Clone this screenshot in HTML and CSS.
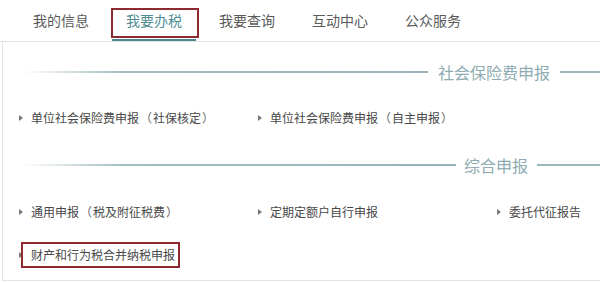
FILE: index.html
```html
<!DOCTYPE html>
<html lang="zh-CN">
<head>
<meta charset="utf-8">
<title>我要办税</title>
<link rel="stylesheet" href="styles.css">
</head>
<body>
<nav class="tabs">
  <a class="tab">我的信息</a>
  <a class="tab active">我要办税</a>
  <a class="tab">我要查询</a>
  <a class="tab">互动中心</a>
  <a class="tab">公众服务</a>
</nav>
<main class="panel">
  <div class="sec-head sec-social">
    <span class="line-left"></span>
    <span class="sec-title">社会保险费申报</span>
    <span class="line-right"></span>
  </div>
  <ul class="items">
    <li class="item">单位社会保险费申报<span class="paren">（</span>社保核定<span class="paren">）</span></li>
    <li class="item">单位社会保险费申报<span class="paren">（</span>自主申报<span class="paren">）</span></li>
  </ul>
  <div class="sec-head sec-general">
    <span class="line-left"></span>
    <span class="sec-title">综合申报</span>
    <span class="line-right"></span>
  </div>
  <ul class="items">
    <li class="item">通用申报<span class="paren">（</span>税及附征税费<span class="paren">）</span></li>
    <li class="item">定期定额户自行申报</li>
    <li class="item">委托代征报告</li>
  </ul>
  <ul class="items items-last">
    <li class="item marked">财产和行为税合并纳税申报</li>
  </ul>
</main>
</body>
</html>
```

FILE: styles.css
```css
* { box-sizing: border-box; }
html, body {
  margin: 0;
  padding: 0;
  background: #fff;
}
body {
  font-family: "Noto Sans CJK SC", "Noto Sans", sans-serif;
  color: #444;
  width: 600px;
  overflow: hidden;
}
.tabs {
  display: flex;
  gap: 9px;
  height: 42px;
  padding-left: 19px;
  border-bottom: 1px solid #e2e2e2;
  align-items: stretch;
}
.tab {
  position: relative;
  padding: 0 14px;
  font-size: 14px;
  line-height: 40px;
  color: #5a5a5a;
  text-decoration: none;
}
.tab.active {
  color: #508d93;
  border-bottom: 2px solid #4a8990;
}
.tab.active::after {
  content: "";
  position: absolute;
  left: -1px;
  right: -3px;
  top: 8px;
  height: 26px;
  border: 2px solid #8c2a2f;
}
.panel {
  margin-left: 2px;
  border-left: 1px solid #e4e4e4;
  border-bottom: 1px solid #e4e4e4;
  height: 239px;
  padding-top: 20px;
}
.sec-head {
  display: flex;
  align-items: center;
  height: 20px;
}
.line-left {
  flex: 1;
  height: 2px;
  background: linear-gradient(to right, rgba(160,188,194,0) 0, rgba(160,188,194,0) 20px, #a3bcc2 120px, #98b3b9 100%);
}
.line-right {
  height: 2px;
  background: #9db6bc;
}
.sec-title {
  font-size: 16px;
  line-height: 20px;
  color: #8eabb2;
}
.sec-social .sec-title { margin: 0 10px 0 10px; }
.sec-social .line-right { width: 40px; }
.sec-general { margin-top: 27px; }
.sec-general .sec-title { margin: 0 9px 0 8px; }
.sec-general .line-right { width: 63px; }
.items {
  list-style: none;
  margin: 26px 0 0 0;
  padding: 0 0 0 16px;
  display: grid;
  grid-template-columns: 239px 239px 1fr;
}
.sec-general + .items { margin-top: 27px; }
.items-last { margin-top: 23px; }
.item {
  position: relative;
  padding-left: 12px;
  font-size: 12px;
  line-height: 20px;
  color: #484848;
  white-space: nowrap;
}
.paren {
  display: inline-block;
  width: 14px;
  text-align: center;
  color: #666;
}
.item::before {
  content: "";
  position: absolute;
  left: 0;
  top: 7px;
  border-left: 4px solid #777;
  border-top: 3px solid transparent;
  border-bottom: 3px solid transparent;
}
.item.marked {
  justify-self: start;
  padding-right: 2px;
}
.item.marked::after {
  content: "";
  position: absolute;
  left: 2px;
  right: -3px;
  top: -3px;
  bottom: -3px;
  border: 2px solid #8c2a2f;
}
```
